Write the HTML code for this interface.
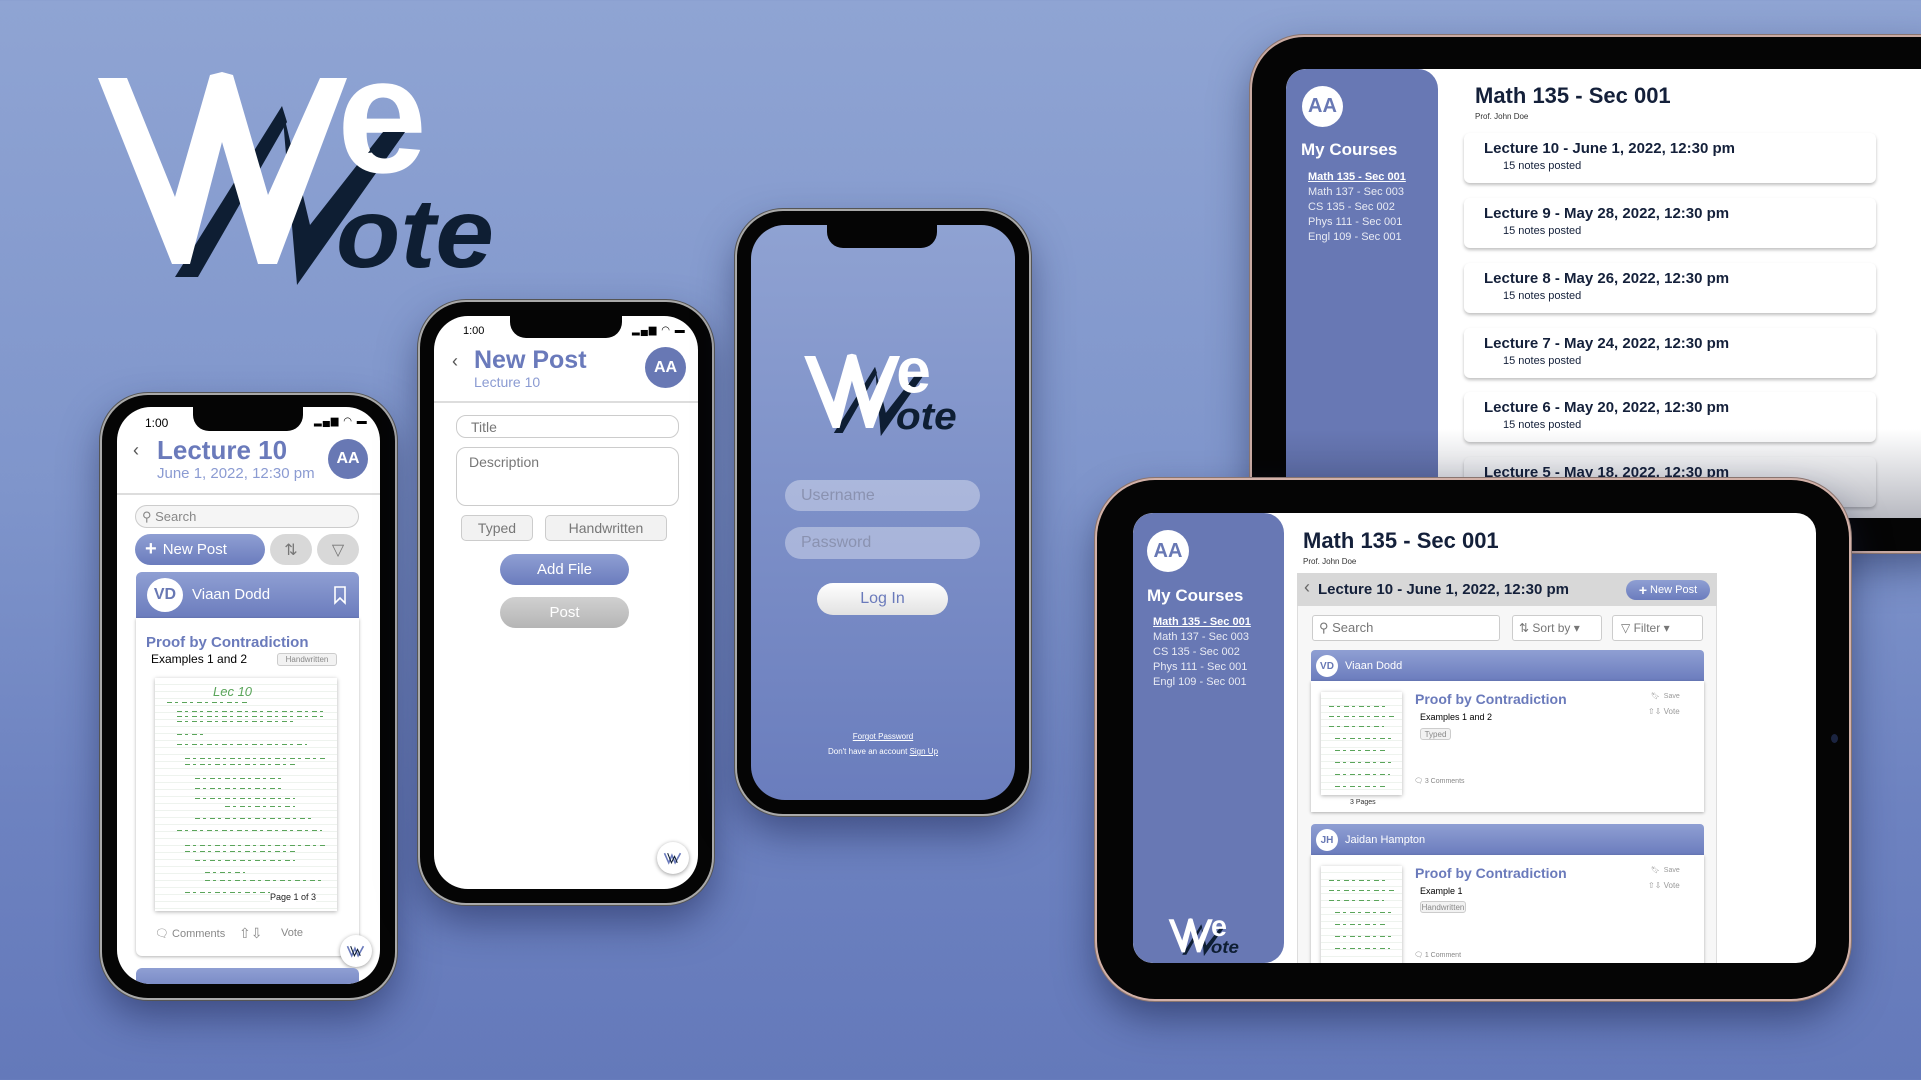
<!DOCTYPE html>
<html><head><meta charset="utf-8">
<style>
*{margin:0;padding:0;box-sizing:border-box}
body{width:1921px;height:1080px;overflow:hidden;position:relative;font-family:"Liberation Sans",sans-serif;background:linear-gradient(180deg,#8fa4d3 0%,#7f95cb 45%,#6d82c0 75%,#6479ba 100%)}
.a{position:absolute}
.phone{position:absolute;background:#050505;border-radius:46px;box-shadow:0 0 0 2px #a9a9a9,0 0 0 3px #555,0 18px 40px rgba(25,35,80,.55)}
.scr{position:absolute;overflow:hidden;background:#fff;border-radius:34px}
.notch{position:absolute;background:#050505;border-radius:0 0 16px 16px}
.circ{position:absolute;border-radius:50%;display:flex;align-items:center;justify-content:center;font-weight:bold}
.blue{color:#6a7abb}
.pill{position:absolute;border-radius:20px;display:flex;align-items:center}
.tag{position:absolute;border:1px solid #ccc;background:#f2f2f2;color:#888;border-radius:3px;display:flex;align-items:center;justify-content:center}
.hdr{position:absolute;background:linear-gradient(180deg,#8f9fd3,#6b7cbd);}
.card{position:absolute;background:#fff;border-radius:6px;box-shadow:0 2px 3px rgba(0,0,0,.25)}
.notes{position:absolute;background:#fff;box-shadow:0 1px 4px rgba(0,0,0,.3);overflow:hidden;
background-image:repeating-linear-gradient(180deg,transparent 0 6px,#eef3ee 6px 7px)}
.gl{position:absolute;height:1px;background:repeating-linear-gradient(90deg,#5aa55a 0 5px,transparent 5px 8px,#5aa55a 8px 11px,transparent 11px 15px)}
svg{overflow:visible}
</style></head><body>

<svg width="0" height="0" style="position:absolute">
<defs>
<symbol id="logo" viewBox="95 65 405 225" overflow="visible">
<polygon fill="#0e1e33" points="175,277 198,277 287,122 282,106"/>
<polygon fill="#0e1e33" points="282,107 310,225 383,132 405,132 297,285"/>
<polygon fill="#fff" points="98,78 127,78 175,197 210,75 222,72 233,75 268,195 320,78 347,78 277,264 258,264 222,142 190,264 172,264"/>
<text x="337" y="172" font-family="Liberation Sans" font-weight="bold" font-size="165" fill="#fff" textLength="90" lengthAdjust="spacingAndGlyphs">e</text>
<polygon fill="#0e1e33" points="383,132 405,132 392,150 368,153"/>
<text x="336" y="267" font-family="Liberation Sans" font-weight="bold" font-style="italic" font-size="98" fill="#0e1e33" textLength="158" lengthAdjust="spacingAndGlyphs">ote</text>
</symbol>
<symbol id="wmark" viewBox="0 0 40 30">
<polyline points="4,6 12,24 18,10 24,24 34,6" fill="none" stroke="#6a7abb" stroke-width="3"/>
<polyline points="10,6 17,24 23,12 28,24" fill="none" stroke="#0e1e33" stroke-width="2"/>
</symbol>
</defs>
</svg>

<!-- big logo -->
<svg class="a" style="left:95px;top:65px" width="405" height="225"><use href="#logo"/></svg>

<!-- BACK TABLET -->
<div class="a" style="left:1252px;top:37px;width:720px;height:514px;background:#050505;border-radius:52px;box-shadow:0 0 0 2px #c9aaa2,0 0 0 3px #8a7570,0 15px 40px rgba(20,30,70,.5)"></div>
<div class="a" style="left:1286px;top:69px;width:680px;height:449px;background:#fff;border-radius:20px 0 0 0;overflow:hidden">
  <div class="a" style="left:0;top:0;width:152px;height:460px;background:#6878b4;border-radius:20px"></div>
  <div class="circ" style="left:16px;top:17px;width:41px;height:41px;background:#fff;color:#6878b4;font-size:20px">AA</div>
  <div class="a" style="left:15px;top:71px;color:#fff;font-weight:bold;font-size:17px">My Courses</div>
  <div class="a" style="left:22px;top:101px;color:#fff;font-size:11px;line-height:15px">
    <div style="font-weight:bold;text-decoration:underline">Math 135 - Sec 001</div><div style="opacity:.85">Math 137 - Sec 003</div><div style="opacity:.85">CS 135 - Sec 002</div><div style="opacity:.85">Phys 111 - Sec 001</div><div style="opacity:.85">Engl 109 - Sec 001</div></div>
  <div class="a" style="left:189px;top:14px;color:#14203a;font-weight:bold;font-size:22px">Math 135 - Sec 001</div>
  <div class="a" style="left:189px;top:43px;color:#333;font-size:8px">Prof. John Doe</div>
  <div class="card" style="left:178px;top:64px;width:412px;height:50px"></div>
  <div class="card" style="left:178px;top:129px;width:412px;height:50px"></div>
  <div class="card" style="left:178px;top:194px;width:412px;height:50px"></div>
  <div class="card" style="left:178px;top:259px;width:412px;height:50px"></div>
  <div class="card" style="left:178px;top:323px;width:412px;height:50px"></div>
  <div class="card" style="left:178px;top:388px;width:412px;height:50px"></div>
  <div class="a" style="left:198px;top:70px;color:#14203a;font-size:15px;font-weight:bold">
    <div style="height:65px;line-height:20px">Lecture 10 - June 1, 2022, 12:30 pm<div style="font-size:11px;font-weight:normal;margin-left:19px;line-height:14px">15 notes posted</div></div>
    <div style="height:65px;line-height:20px">Lecture 9 - May 28, 2022, 12:30 pm<div style="font-size:11px;font-weight:normal;margin-left:19px;line-height:14px">15 notes posted</div></div>
    <div style="height:65px;line-height:20px">Lecture 8 - May 26, 2022, 12:30 pm<div style="font-size:11px;font-weight:normal;margin-left:19px;line-height:14px">15 notes posted</div></div>
    <div style="height:64px;line-height:20px">Lecture 7 - May 24, 2022, 12:30 pm<div style="font-size:11px;font-weight:normal;margin-left:19px;line-height:14px">15 notes posted</div></div>
    <div style="height:65px;line-height:20px">Lecture 6 - May 20, 2022, 12:30 pm<div style="font-size:11px;font-weight:normal;margin-left:19px;line-height:14px">15 notes posted</div></div>
    <div style="height:65px;line-height:20px">Lecture 5 - May 18, 2022, 12:30 pm</div>
  </div>
  <div class="a" style="left:0;top:360px;width:680px;height:89px;background:linear-gradient(180deg,rgba(20,25,50,0),rgba(20,25,50,.3) 100%)"></div>
</div>

<!-- PHONE 1 -->
<div class="phone" style="left:102px;top:395px;width:293px;height:603px"></div>
<div class="scr" style="left:117px;top:407px;width:263px;height:577px">
  <div class="notch" style="left:76px;top:0;width:110px;height:24px"></div>
  <div class="a" style="left:28px;top:9px;font-size:12px">1:00</div>
  <div class="a" style="left:197px;top:9px;font-size:10px;letter-spacing:1px">▂▄▆ ◠ ▬</div>
  <div class="a" style="left:16px;top:33px;font-size:18px;color:#555">‹</div>
  <div class="a blue" style="left:40px;top:28px;font-size:26px;font-weight:bold">Lecture 10</div>
  <div class="a" style="left:40px;top:58px;font-size:15px;color:#8b9bd2">June 1, 2022, 12:30 pm</div>
  <div class="circ" style="left:211px;top:32px;width:40px;height:40px;background:#6878b4;color:#fff;font-size:16px">AA</div>
  <div class="a" style="left:0;top:86px;width:263px;height:2px;background:#ddd"></div>
  <div class="pill" style="left:18px;top:98px;width:224px;height:23px;border:1.5px solid #ccc;background:#f5f5f5;color:#888;font-size:13px;padding-left:6px">⚲&nbsp;Search</div>
  <div class="pill" style="left:18px;top:127px;width:130px;height:31px;background:linear-gradient(180deg,#8f9fd3,#6b7cbd);color:#fff;font-size:15px;padding-left:10px"><b style="font-size:20px;margin-right:6px">+</b>New Post</div>
  <div class="pill" style="left:153px;top:127px;width:42px;height:31px;background:#d8d8d8;color:#777;justify-content:center;font-size:16px">⇅</div>
  <div class="pill" style="left:200px;top:127px;width:42px;height:31px;background:#d8d8d8;color:#777;justify-content:center;font-size:16px">▽</div>
  <div class="hdr" style="left:19px;top:165px;width:223px;height:46px;border-radius:6px 6px 0 0"></div>
  <div class="circ" style="left:30px;top:171px;width:36px;height:34px;background:#fff;color:#6878b4;font-size:16px">VD</div>
  <div class="a" style="left:75px;top:179px;color:#fff;font-size:15px">Viaan Dodd</div>
  <svg class="a" style="left:216px;top:179px" width="14" height="18"><path d="M2 1h10v16l-5-5-5 5z" fill="none" stroke="#fff" stroke-width="1.6"/></svg>
  <div class="a" style="left:19px;top:211px;width:223px;height:338px;background:#fff;box-shadow:0 1px 3px rgba(0,0,0,.3);border-radius:0 0 6px 6px"></div>
  <div class="a blue" style="left:29px;top:227px;font-size:15px;font-weight:bold">Proof by Contradiction</div>
  <div class="a" style="left:34px;top:245px;font-size:12px">Examples 1 and 2</div>
  <div class="tag" style="left:160px;top:246px;width:60px;height:13px;font-size:8px">Handwritten</div>
  <div class="notes" style="left:38px;top:271px;width:182px;height:233px">
    <div class="a" style="left:58px;top:6px;color:#5aa55a;font-size:13px;font-style:italic">Lec 10</div>
    <div class="gl" style="left:12px;top:24px;width:80px"></div><div class="gl" style="left:22px;top:33px;width:150px"></div><div class="gl" style="left:22px;top:38px;width:150px"></div><div class="gl" style="left:22px;top:43px;width:120px"></div><div class="gl" style="left:22px;top:56px;width:30px"></div><div class="gl" style="left:22px;top:66px;width:130px"></div><div class="gl" style="left:30px;top:80px;width:140px"></div><div class="gl" style="left:30px;top:86px;width:110px"></div><div class="gl" style="left:40px;top:100px;width:90px"></div><div class="gl" style="left:40px;top:110px;width:90px"></div><div class="gl" style="left:40px;top:120px;width:100px"></div><div class="gl" style="left:70px;top:128px;width:70px"></div><div class="gl" style="left:40px;top:140px;width:120px"></div><div class="gl" style="left:22px;top:152px;width:145px"></div><div class="gl" style="left:30px;top:167px;width:140px"></div><div class="gl" style="left:30px;top:173px;width:110px"></div><div class="gl" style="left:40px;top:182px;width:100px"></div><div class="gl" style="left:50px;top:194px;width:40px"></div><div class="gl" style="left:50px;top:202px;width:120px"></div><div class="gl" style="left:30px;top:214px;width:90px"></div>
    <div class="a" style="left:115px;top:214px;font-size:9px;color:#222;background:#fff">Page 1 of 3</div>
  </div>
  <div class="a" style="left:38px;top:520px;font-size:11px;color:#888">🗨 Comments</div>
  <div class="a" style="left:122px;top:518px;font-size:14px;color:#888">⇧⇩</div>
  <div class="a" style="left:164px;top:520px;font-size:11px;color:#888">Vote</div>
  <div class="circ" style="left:223px;top:528px;width:32px;height:32px;background:#fff;box-shadow:0 1px 4px rgba(0,0,0,.4)"><svg width="22" height="16"><use href="#wmark"/></svg></div>
  <div class="hdr" style="left:19px;top:561px;width:223px;height:30px;border-radius:6px 6px 0 0"></div>
</div>

<!-- PHONE 2 -->
<div class="phone" style="left:420px;top:302px;width:292px;height:601px"></div>
<div class="scr" style="left:434px;top:316px;width:264px;height:573px">
  <div class="notch" style="left:76px;top:0;width:112px;height:22px"></div>
  <div class="a" style="left:29px;top:9px;font-size:11px">1:00</div>
  <div class="a" style="left:198px;top:9px;font-size:10px;letter-spacing:1px">▂▄▆ ◠ ▬</div>
  <div class="a" style="left:18px;top:35px;font-size:18px;color:#555">‹</div>
  <div class="a blue" style="left:40px;top:30px;font-size:25px;font-weight:bold">New Post</div>
  <div class="a" style="left:40px;top:58px;font-size:14px;color:#8b9bd2">Lecture 10</div>
  <div class="circ" style="left:211px;top:31px;width:41px;height:41px;background:#6878b4;color:#fff;font-size:16px">AA</div>
  <div class="a" style="left:0;top:85px;width:264px;height:2px;background:#ddd"></div>
  <div class="pill" style="left:22px;top:99px;width:223px;height:23px;border:1.5px solid #ccc;color:#777;font-size:14px;padding-left:14px;border-radius:10px">Title</div>
  <div class="a" style="left:22px;top:131px;width:223px;height:59px;border:1.5px solid #ccc;color:#777;font-size:14px;padding:6px 12px;border-radius:10px">Description</div>
  <div class="tag" style="left:27px;top:199px;width:72px;height:26px;font-size:14px;color:#777;border-radius:5px">Typed</div>
  <div class="tag" style="left:111px;top:199px;width:122px;height:26px;font-size:14px;color:#777;border-radius:5px">Handwritten</div>
  <div class="pill" style="left:66px;top:238px;width:129px;height:31px;background:linear-gradient(180deg,#8f9fd3,#6b7cbd);color:#fff;font-size:15px;justify-content:center">Add File</div>
  <div class="pill" style="left:66px;top:281px;width:129px;height:31px;background:linear-gradient(180deg,#d0d0d0,#b5b5b5);color:#fff;font-size:15px;justify-content:center">Post</div>
  <div class="circ" style="left:223px;top:526px;width:32px;height:32px;background:#fff;box-shadow:0 1px 4px rgba(0,0,0,.4)"><svg width="22" height="16"><use href="#wmark"/></svg></div>
</div>

<!-- PHONE 3 -->
<div class="phone" style="left:737px;top:211px;width:292px;height:603px"></div>
<div class="scr" style="left:751px;top:225px;width:264px;height:575px;background:linear-gradient(180deg,#8fa2d2,#6a7dbd)">
  <div class="notch" style="left:76px;top:0;width:110px;height:23px"></div>
  <svg class="a" style="left:52px;top:126px" width="156" height="87" viewBox="95 65 405 225" preserveAspectRatio="none"><use href="#logo" x="95" y="65" width="405" height="225"/></svg>
  <div class="pill" style="left:34px;top:255px;width:195px;height:31px;background:rgba(255,255,255,.35);color:#8a92b0;font-size:16px;padding-left:16px">Username</div>
  <div class="pill" style="left:34px;top:302px;width:195px;height:32px;background:rgba(255,255,255,.35);color:#8a92b0;font-size:16px;padding-left:16px">Password</div>
  <div class="pill" style="left:66px;top:358px;width:131px;height:32px;background:linear-gradient(180deg,#fff,#e2e2e2);color:#6a7abb;font-size:16px;justify-content:center">Log In</div>
  <div class="a" style="left:0;width:264px;top:507px;text-align:center;color:#fff;font-size:8px;text-decoration:underline">Forgot Password</div>
  <div class="a" style="left:0;width:264px;top:522px;text-align:center;color:#fff;font-size:8px">Don't have an account <u>Sign Up</u></div>
</div>

<!-- FRONT TABLET -->
<div class="a" style="left:1097px;top:480px;width:752px;height:519px;background:#050505;border-radius:58px;box-shadow:0 0 0 2px #d2b1a8,0 0 0 3px #8a7570,0 18px 40px rgba(20,30,70,.55)"></div>
<div class="a" style="left:1831px;top:734px;width:7px;height:9px;border-radius:50%;background:#1b2440"></div>
<div class="a" style="left:1133px;top:513px;width:683px;height:450px;background:#fff;border-radius:20px;overflow:hidden">
  <div class="a" style="left:0;top:0;width:151px;height:450px;background:#6878b4;border-radius:20px"></div>
  <div class="circ" style="left:14px;top:17px;width:42px;height:42px;background:#fff;color:#6878b4;font-size:20px">AA</div>
  <div class="a" style="left:14px;top:73px;color:#fff;font-weight:bold;font-size:17px">My Courses</div>
  <div class="a" style="left:20px;top:102px;color:#fff;font-size:11px;line-height:15px">
    <div style="font-weight:bold;text-decoration:underline">Math 135 - Sec 001</div><div style="opacity:.85">Math 137 - Sec 003</div><div style="opacity:.85">CS 135 - Sec 002</div><div style="opacity:.85">Phys 111 - Sec 001</div><div style="opacity:.85">Engl 109 - Sec 001</div></div>
  <svg class="a" style="left:35px;top:404px" width="72" height="40" viewBox="95 65 405 225" preserveAspectRatio="none"><use href="#logo" x="95" y="65" width="405" height="225"/></svg>
  <div class="a" style="left:170px;top:15px;color:#14203a;font-weight:bold;font-size:22px">Math 135 - Sec 001</div>
  <div class="a" style="left:170px;top:44px;color:#333;font-size:8px">Prof. John Doe</div>
  <div class="a" style="left:164px;top:60px;width:420px;height:400px;background:#f7f7f7;border:1px solid #ddd"></div>
  <div class="a" style="left:164px;top:60px;width:420px;height:33px;background:#d8d8d8"></div>
  <div class="a" style="left:171px;top:64px;font-size:18px;color:#666">‹</div>
  <div class="a" style="left:185px;top:68px;font-size:15px;font-weight:bold;color:#14203a">Lecture 10 - June 1, 2022, 12:30 pm</div>
  <div class="pill" style="left:493px;top:67px;width:84px;height:20px;background:linear-gradient(180deg,#8f9fd3,#6b7cbd);color:#fff;font-size:11px;justify-content:center"><b style="font-size:14px;margin-right:3px">+</b>New Post</div>
  <div class="a" style="left:179px;top:102px;width:188px;height:26px;border:1px solid #ccc;background:#fff;border-radius:3px;color:#777;font-size:13px;line-height:24px;padding-left:6px">⚲ Search</div>
  <div class="a" style="left:379px;top:102px;width:90px;height:26px;border:1px solid #ccc;background:#fff;border-radius:3px;color:#777;font-size:12px;line-height:24px;padding-left:6px">⇅ Sort by ▾</div>
  <div class="a" style="left:479px;top:102px;width:91px;height:26px;border:1px solid #ccc;background:#fff;border-radius:3px;color:#777;font-size:12px;line-height:24px;padding-left:8px">▽ Filter ▾</div>

  <div class="hdr" style="left:178px;top:137px;width:393px;height:31px;border-radius:4px 4px 0 0"></div>
  <div class="circ" style="left:183px;top:142px;width:22px;height:22px;background:#fff;color:#6878b4;font-size:10px">VD</div>
  <div class="a" style="left:212px;top:147px;color:#fff;font-size:11px">Viaan Dodd</div>
  <div class="a" style="left:178px;top:168px;width:393px;height:131px;background:#fff;box-shadow:0 1px 3px rgba(0,0,0,.3)"></div>
  <div class="notes" style="left:188px;top:179px;width:81px;height:103px"><div class="gl" style="left:8px;top:14px;width:60px"></div><div class="gl" style="left:8px;top:24px;width:65px"></div><div class="gl" style="left:8px;top:34px;width:55px"></div><div class="gl" style="left:14px;top:46px;width:60px"></div><div class="gl" style="left:14px;top:58px;width:50px"></div><div class="gl" style="left:14px;top:70px;width:60px"></div><div class="gl" style="left:14px;top:82px;width:55px"></div><div class="gl" style="left:14px;top:94px;width:50px"></div></div>
  <div class="a" style="left:217px;top:286px;font-size:7px;color:#333">3 Pages</div>
  <div class="a blue" style="left:282px;top:178px;font-size:14px;font-weight:bold">Proof by Contradiction</div>
  <div class="a" style="left:287px;top:199px;font-size:9px">Examples 1 and 2</div>
  <div class="tag" style="left:287px;top:215px;width:31px;height:12px;font-size:8px">Typed</div>
  <div class="a" style="left:281px;top:264px;font-size:7px;color:#888">🗨 3 Comments</div>
  <div class="a" style="left:518px;top:179px;font-size:7px;color:#999">🔖︎&nbsp;&nbsp;Save</div>
  <div class="a" style="left:515px;top:194px;font-size:8px;color:#999">⇧⇩ Vote</div>

  <div class="hdr" style="left:178px;top:311px;width:393px;height:31px;border-radius:4px 4px 0 0"></div>
  <div class="circ" style="left:183px;top:316px;width:22px;height:22px;background:#fff;color:#6878b4;font-size:10px">JH</div>
  <div class="a" style="left:212px;top:321px;color:#fff;font-size:11px">Jaidan Hampton</div>
  <div class="a" style="left:178px;top:342px;width:393px;height:131px;background:#fff;box-shadow:0 1px 3px rgba(0,0,0,.3)"></div>
  <div class="notes" style="left:188px;top:353px;width:81px;height:103px"><div class="gl" style="left:8px;top:14px;width:60px"></div><div class="gl" style="left:8px;top:24px;width:65px"></div><div class="gl" style="left:8px;top:34px;width:55px"></div><div class="gl" style="left:14px;top:46px;width:60px"></div><div class="gl" style="left:14px;top:58px;width:50px"></div><div class="gl" style="left:14px;top:70px;width:60px"></div><div class="gl" style="left:14px;top:82px;width:55px"></div></div>
  <div class="a blue" style="left:282px;top:352px;font-size:14px;font-weight:bold">Proof by Contradiction</div>
  <div class="a" style="left:287px;top:373px;font-size:9px">Example 1</div>
  <div class="tag" style="left:287px;top:388px;width:46px;height:12px;font-size:8px">Handwritten</div>
  <div class="a" style="left:281px;top:438px;font-size:7px;color:#888">🗨 1 Comment</div>
  <div class="a" style="left:518px;top:353px;font-size:7px;color:#999">🔖︎&nbsp;&nbsp;Save</div>
  <div class="a" style="left:515px;top:368px;font-size:8px;color:#999">⇧⇩ Vote</div>
</div>

</body></html>
